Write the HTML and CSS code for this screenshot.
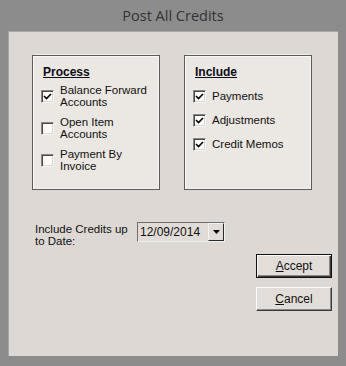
FILE: index.html
```html
<!DOCTYPE html>
<html>
<head>
<meta charset="utf-8">
<link rel="stylesheet" href="styles.css">
</head>
<body>
<div class="window">
  <div class="titlebar">Post All Credits</div>
  <div class="client">
    <div class="groups">
      <div class="group process">
        <div class="legend">Process</div>
        <div class="item two"><span class="cbox"><svg viewBox="0 0 9 9" width="9" height="9"><path d="M1 4 L3.5 6.5 L8 2" fill="none" stroke="#000" stroke-width="1.6"/></svg></span><span class="lbl">Balance Forward<br>Accounts</span></div>
        <div class="item two"><span class="cbox"></span><span class="lbl">Open Item<br>Accounts</span></div>
        <div class="item two"><span class="cbox"></span><span class="lbl">Payment By<br>Invoice</span></div>
      </div>
      <div class="group include">
        <div class="legend">Include</div>
        <div class="item one"><span class="cbox"><svg viewBox="0 0 9 9" width="9" height="9"><path d="M1 4 L3.5 6.5 L8 2" fill="none" stroke="#000" stroke-width="1.6"/></svg></span><span class="lbl">Payments</span></div>
        <div class="item one"><span class="cbox"><svg viewBox="0 0 9 9" width="9" height="9"><path d="M1 4 L3.5 6.5 L8 2" fill="none" stroke="#000" stroke-width="1.6"/></svg></span><span class="lbl">Adjustments</span></div>
        <div class="item one last"><span class="cbox"><svg viewBox="0 0 9 9" width="9" height="9"><path d="M1 4 L3.5 6.5 L8 2" fill="none" stroke="#000" stroke-width="1.6"/></svg></span><span class="lbl">Credit Memos</span></div>
      </div>
    </div>
    <div class="date-row">
      <div class="date-label">Include Credits up<br>to Date:</div>
      <div class="date-field">
        <span class="date-text">12/09/2014</span>
        <span class="drop"><svg viewBox="0 0 7 4" width="7" height="4"><path d="M0 0 H7 L3.5 4 Z" fill="#000"/></svg></span>
      </div>
    </div>
    <div class="buttons">
      <div class="btn default"><span class="inner"><u>A</u>ccept</span></div>
      <div class="btn"><span class="inner"><u>C</u>ancel</span></div>
    </div>
  </div>
</div>
</body>
</html>
```
FILE: styles.css
```css
html, body {
  margin: 0;
  padding: 0;
  background: #8c8c8c;
}
.window {
  width: 346px;
  height: 366px;
  box-sizing: border-box;
  background: #8c8c8c;
  display: flex;
  flex-direction: column;
}
.titlebar {
  height: 31px;
  line-height: 31px;
  text-align: center;
  font-family: "Open Sans", "Noto Sans", sans-serif;
  font-size: 14.5px;
  color: #333;
  box-sizing: border-box;
  padding-bottom: 1px;
}
.client {
  margin: 0 8px;
  height: 325px;
  background: #ddd8d3;
  box-sizing: border-box;
  border-left: 1px solid #a8a6a4;
  border-top: 1px solid #a8a6a4;
  padding: 23px 6px 0 23px;
  font-family: "Liberation Sans", Arial, sans-serif;
  font-size: 11.5px;
  color: #111;
  display: flex;
  flex-direction: column;
}
.groups {
  display: flex;
  gap: 24px;
}
.group {
  width: 128px;
  height: 135px;
  box-sizing: border-box;
  background: #ebe7e2;
  border: 1px solid #5e5b58;
  box-shadow: inset 1px 1px 0 #fbfaf8, inset -1px -1px 0 #f4f2ef, 0 -3px 0 -2px #f2efeb;
  padding: 9px 0 0 8px;
}
.legend {
  font-weight: bold;
  text-decoration: underline;
  font-size: 12px;
  line-height: 14px;
  margin-left: 2px;
  color: #0c0c18;
}
.item {
  display: flex;
  align-items: center;
  gap: 6px;
}
.process .item.two {
  margin-top: 5px;
}
.process .item.two + .item.two {
  margin-top: 8px;
}
.include .item.one {
  margin-top: 10px;
}
.include .item.one + .item.one {
  margin-top: 10px;
}
.include .item.last {
  margin-top: 12px;
}
.lbl {
  line-height: 12px;
}
.include .lbl {
  line-height: 14px;
}
.cbox {
  width: 13px;
  height: 13px;
  box-sizing: border-box;
  background: #fbfbfa;
  border-top: 1px solid #8a8884;
  border-left: 1px solid #8a8884;
  border-right: 1px solid #f7f6f4;
  border-bottom: 1px solid #f7f6f4;
  box-shadow: inset 1px 1px 0 #4a4846, inset -1px -1px 0 #d8d4cf;
  display: flex;
  align-items: center;
  justify-content: center;
  flex-shrink: 0;
}
.cbox svg {
  display: block;
}
.date-row {
  display: flex;
  align-items: flex-start;
  margin-top: 32px;
  margin-left: 3px;
}
.date-label {
  width: 102px;
  line-height: 12px;
  padding-top: 1px;
}
.date-field {
  display: flex;
  width: 88px;
  height: 20px;
  box-sizing: border-box;
  border-top: 1px solid #6f6c69;
  border-left: 1px solid #6f6c69;
  border-right: 1px solid #f4f2ef;
  border-bottom: 1px solid #f4f2ef;
  background: #e1dcd7;
}
.date-text {
  flex: 1;
  padding-left: 2px;
  line-height: 18px;
  font-size: 12px;
}
.drop {
  width: 16px;
  box-sizing: border-box;
  border: 1px solid #2a2a2a;
  border-top-color: #f5f3f0;
  border-left-color: #f5f3f0;
  background: #e2ddd8;
  display: flex;
  align-items: center;
  justify-content: center;
}
.buttons {
  display: flex;
  flex-direction: column;
  align-items: flex-end;
  gap: 9px;
  margin-top: 7px;
}
.btn {
  width: 76px;
  height: 24px;
  box-sizing: border-box;
  background: #e2ddd8;
  border: 1px solid #3a3a3a;
  border-top-color: #fbfaf8;
  border-left-color: #fbfaf8;
  box-shadow: inset -1px -1px 0 #8a8784;
  display: flex;
  align-items: center;
  justify-content: center;
  font-size: 12px;
  color: #111;
}
.btn.default {
  border: 1px solid #111;
  box-shadow: inset 1px 1px 0 #fbfaf8, inset -1px -1px 0 #3a3a3a, inset -2px -2px 0 #8a8784;
}
.btn u {
  text-decoration: underline;
}
```
